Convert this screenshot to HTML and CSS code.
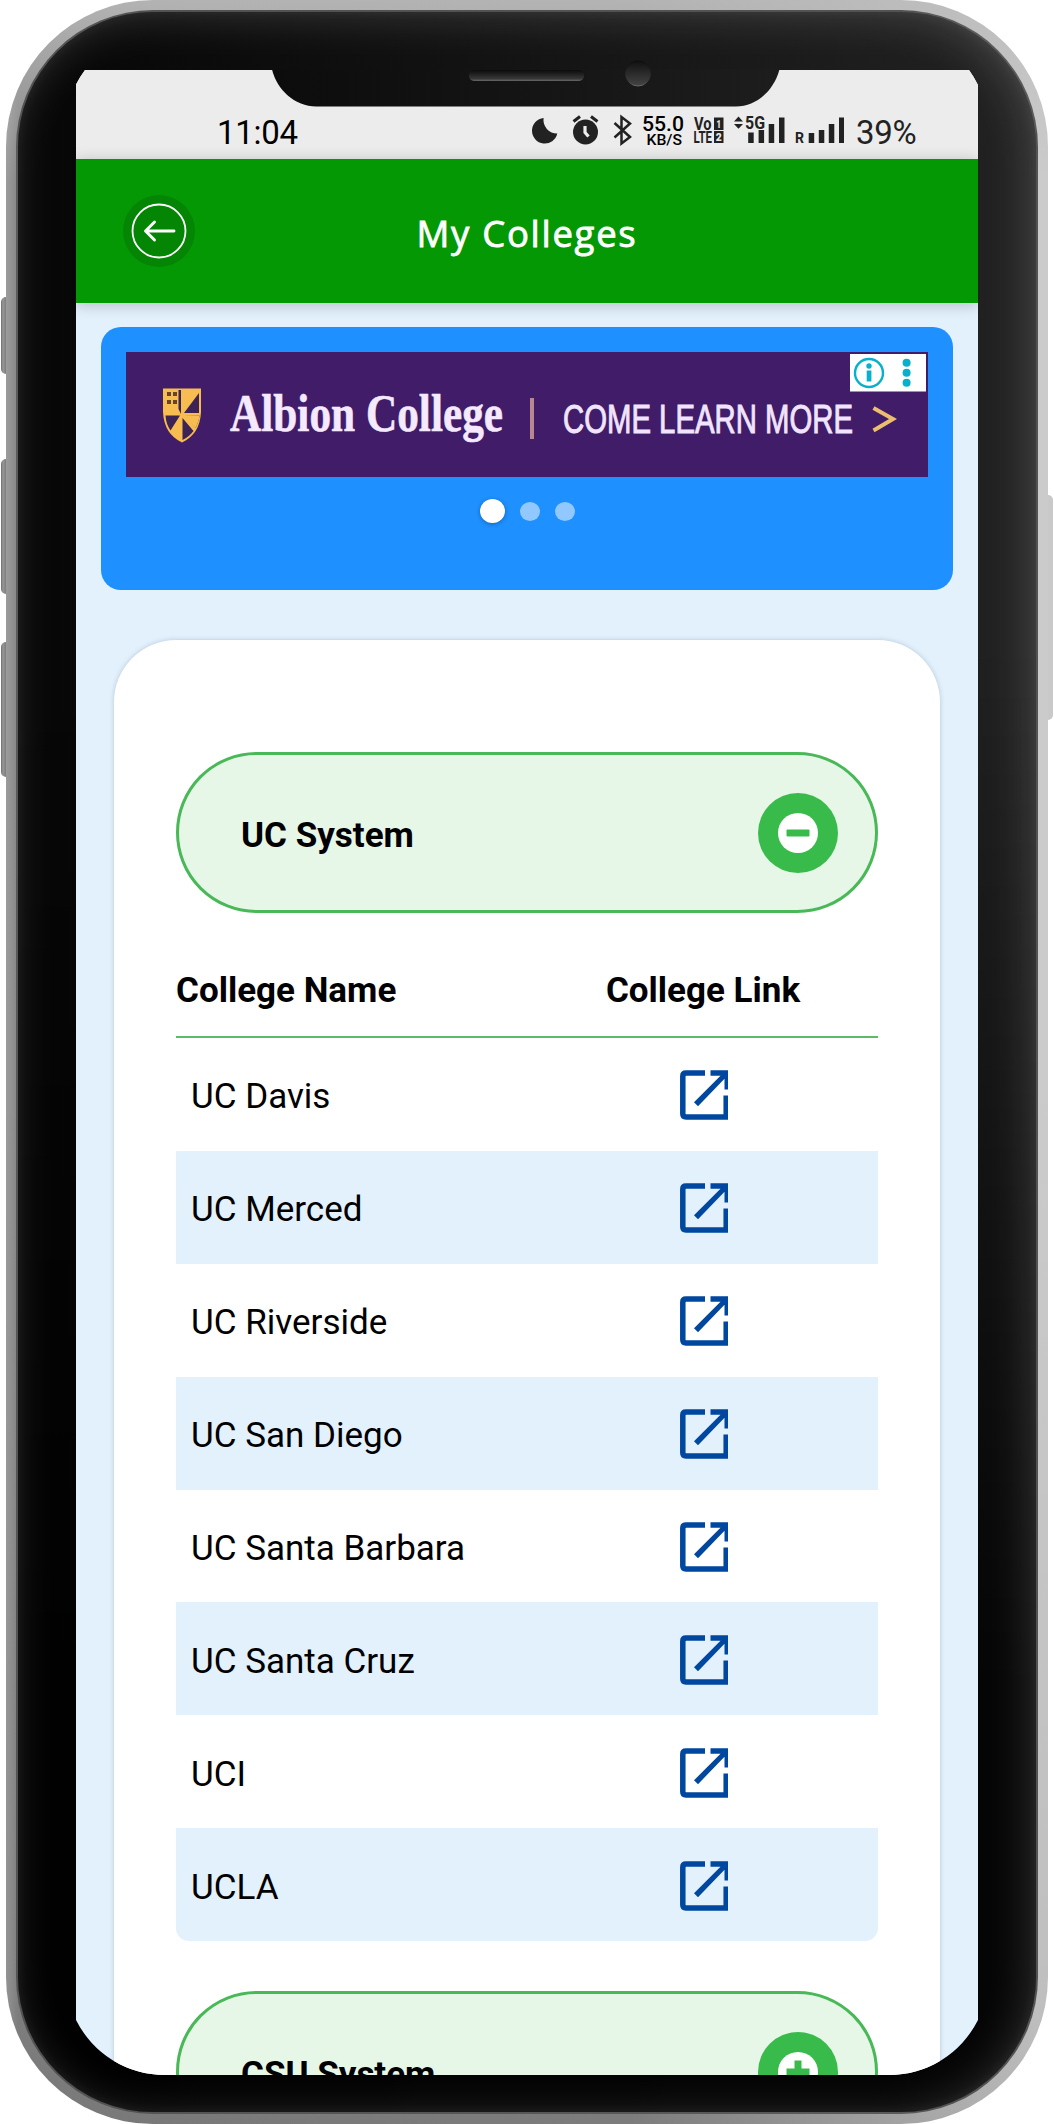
FILE: index.html
```html
<!DOCTYPE html>
<html lang="en">
<head>
<meta charset="utf-8">
<title>My Colleges</title>
<link rel="stylesheet" href="styles.css">
</head>
<body>
<svg class="defs" width="0" height="0" aria-hidden="true">
  <symbol id="open-link" viewBox="0 0 48 50">
    <path d="M25 3H6Q2.8 3 2.8 6.200V43.800Q2.800 47 6 47H46.200V25.500" fill="none" stroke="#00479f" stroke-width="5.500"/>
    <path d="M30.500 .3H48V19.500H44.500V8.800L18 36.200L14 32.300L40.500 5.800H30.500Z" fill="#00479f"/>
  </symbol>
</svg>
<div class="phone">
  <span class="key key-mute"></span>
  <span class="key key-up"></span>
  <span class="key key-down"></span>
  <span class="key key-power"></span>
  <div class="bezel">
    <main class="screen">
      <div class="status">
        <span class="clock">11:04</span>
        <svg class="status-icons" width="292" height="36" viewBox="530 112 292 36" fill="#222">
          <path d="M543.600 118A12.800 12.800 0 1 0 557.300 133.500A13.500 13.500 0 0 1 543.600 118Z"/>
          <circle cx="585.500" cy="132" r="12.500"/>
          <path d="M573.500 121.500L580 116.500M597.500 121.500L591 116.500" stroke="#222" stroke-width="3"/>
          <path d="M585 126V132.500L588.500 136.500" stroke="#ececec" stroke-width="3.200" fill="none"/>
          <path d="M614.500 123L630 137L621.500 143.500V117L630 123.500L614.500 137.500" fill="none" stroke="#222" stroke-width="2.500"/>
          <g font-family="Roboto, sans-serif" font-weight="500">
            <text x="642" y="131" font-size="20.500" textLength="42" lengthAdjust="spacingAndGlyphs" fill="#000">55.0</text>
            <text x="646.500" y="145" font-size="15.500" textLength="35.500" lengthAdjust="spacingAndGlyphs" fill="#000">KB/S</text>
            <text x="694" y="130" font-size="17.500" font-weight="700" textLength="17.500" lengthAdjust="spacingAndGlyphs">Vo</text>
            <text x="693.500" y="143" font-size="16.500" font-weight="700" textLength="18.500" lengthAdjust="spacingAndGlyphs">LTE</text>
            <text x="745" y="128.500" font-size="17.500" font-weight="700" textLength="20" lengthAdjust="spacingAndGlyphs">5G</text>
            <text x="795" y="143" font-size="15" font-weight="700" textLength="9" lengthAdjust="spacingAndGlyphs">R</text>
            <path d="M714 117.500h9.500v12.500h-9.500zM714 131h9.500v12h-9.500z"/>
            <text x="716.500" y="128" font-size="11" font-weight="900" fill="#ececec" textLength="4.500" lengthAdjust="spacingAndGlyphs">1</text>
            <text x="715.800" y="141" font-size="11" font-weight="900" fill="#ececec" textLength="6" lengthAdjust="spacingAndGlyphs">2</text>
          </g>
          <path d="M734 121.500L738.500 116.500L743 121.500ZM734 124L738.500 128.800L743 124Z"/>
          <path d="M748.200 132.500h5.500v10.500h-5.500zM758.600 130h5.500v13h-5.500zM768.700 124h5.500v19h-5.500zM779 117.500h5.500v25.500h-5.500z"/>
          <path d="M808.700 133h5.500v10h-5.500z"/>
        </svg>
        <svg class="signal" width="26" height="36" viewBox="818 112 26 36" fill="#222">
          <path d="M818.800 130h5.500v13h-5.500zM828.800 124h5.500v19h-5.500zM839 117.500h5v25.500h-5z"/>
        </svg>
        <span class="battery">39%</span>
      </div>
      <header class="bar">
        <svg class="back" width="72" height="72" viewBox="0 0 72 72" fill="none" stroke="#fff">
          <circle cx="36" cy="36" r="36" fill="#048604" stroke="none"/>
          <circle cx="36" cy="36" r="26.500" stroke-width="1.800"/>
          <path d="M51 36H23M31.500 27L22.500 36L31.500 45" stroke-width="2.900" stroke-linejoin="round" stroke-linecap="round"/>
        </svg>
        <h1>My Colleges</h1>
      </header>
      <section class="promo">
        <svg class="ad" width="802" height="125" viewBox="126 352 802 125">
          <rect x="126" y="352" width="802" height="125" fill="#401c69"/>
          <path d="M163 388.500H201V412Q200 434 182 442.500Q164 434 163 412Z" fill="#f7bd50"/>
          <path d="M181 414V390H178.500V409ZM184 413L199 393V413ZM180 415.500H165.500Q166 424 170.500 430.500ZM182.500 418V440Q189 437 193.500 431ZM185 415.500L195.500 428Q199 421 199.500 415.500Z" fill="#3d2255"/>
          <path d="M182.500 415L199.500 415.500Q199 421 195.500 428Z" fill="#f7bd50"/>
          <path d="M167 392h4v4h-4zM173 392h4v4h-4zM167 400h4v4h-4zM173 400h4v4h-4z" fill="#68442e"/>
          <text x="230" y="431" font-family="Liberation Serif, serif" font-weight="700" font-size="53" fill="#f4e9ff" stroke="#f4e9ff" stroke-width=".6" textLength="273" lengthAdjust="spacingAndGlyphs">Albion College</text>
          <rect x="530" y="398" width="4" height="41" fill="#b98792"/>
          <text x="563" y="433" font-family="Liberation Sans, sans-serif" font-size="41" fill="#f0e4ff" stroke="#f0e4ff" stroke-width="1" textLength="290" lengthAdjust="spacingAndGlyphs">COME LEARN MORE</text>
          <path d="M873.500 408L893 419L873.500 430.500" fill="none" stroke="#edbd70" stroke-width="4"/>
          <rect x="850" y="354" width="76" height="37.500" fill="#fff"/>
          <circle cx="869" cy="373" r="14" fill="none" stroke="#09b0cb" stroke-width="2.400"/>
          <g fill="#09b0cb"><circle cx="869" cy="366" r="2.700"/><path d="M866.700 370.500h4.700v11h-4.700z"/><circle cx="906.600" cy="362.800" r="4"/><circle cx="906.600" cy="372.800" r="4"/><circle cx="906.600" cy="382.800" r="4"/></g>
        </svg>
        <div class="dots"><i class="on"></i><i></i><i></i></div>
      </section>
      <section class="card">
        <div class="pill">
          <h2>UC System</h2>
          <svg width="80" height="80" viewBox="0 0 80 80"><circle cx="40" cy="40" r="40" fill="#39bb4b"/><circle cx="40" cy="40" r="20" fill="#fff"/><rect x="28.500" y="36.500" width="23" height="7" rx="1" fill="#39bb4b"/></svg>
        </div>
        <div class="table">
          <div class="row head"><span>College Name</span><span>College Link</span></div>
          <div class="row"><span>UC Davis</span><svg><use href="#open-link"/></svg></div>
          <div class="row"><span>UC Merced</span><svg><use href="#open-link"/></svg></div>
          <div class="row"><span>UC Riverside</span><svg><use href="#open-link"/></svg></div>
          <div class="row"><span>UC San Diego</span><svg><use href="#open-link"/></svg></div>
          <div class="row"><span>UC Santa Barbara</span><svg><use href="#open-link"/></svg></div>
          <div class="row"><span>UC Santa Cruz</span><svg><use href="#open-link"/></svg></div>
          <div class="row"><span>UCI</span><svg><use href="#open-link"/></svg></div>
          <div class="row"><span>UCLA</span><svg><use href="#open-link"/></svg></div>
        </div>
        <div class="pill">
          <h2>CSU System</h2>
          <svg width="80" height="80" viewBox="0 0 80 80"><circle cx="40" cy="40" r="40" fill="#39bb4b"/><circle cx="40" cy="40" r="20" fill="#fff"/><path d="M28.500 36.500h8v-8h7v8h8v7h-8v8h-7v-8h-8z" fill="#39bb4b"/></svg>
        </div>
      </section>
    </main>
    <svg class="notch" width="510" height="50" viewBox="271 58 510 50">
      <defs>
        <linearGradient id="body"><stop offset="0" stop-color="#0c0c0c"/><stop offset="1" stop-color="#1d1d1d"/></linearGradient>
        <linearGradient id="slot" x2="0" y2="1"><stop offset="0" stop-color="#0b0b0b"/><stop offset=".8" stop-color="#383838"/><stop offset="1" stop-color="#6a6a6a"/></linearGradient>
        <linearGradient id="lens" x2="0" y2="1"><stop offset="0" stop-color="#111"/><stop offset="1" stop-color="#444"/></linearGradient>
      </defs>
      <path d="M272 69.500C277 90 295 106.500 316 106.500H736C757 106.500 774 90 779.500 69.500Z" fill="url(#body)"/>
      <rect x="469" y="70" width="115" height="11" rx="5" fill="url(#slot)"/>
      <circle cx="638" cy="73.500" r="12.500" fill="url(#lens)" stroke="url(#slot)"/>
    </svg>
  </div>
</div>
</body>
</html>
```
FILE: styles.css
```css
* { box-sizing: border-box; }
body { margin: 0; background: #fff; font-family: Roboto, sans-serif; color: #000; }
.defs { display: block; }

/* device frame */
.phone {
  position: relative;
  width: 1042px;
  height: 2124px;
  margin: 0 6px;
  padding: 10px;
  border-radius: 147px / 147px;
  background:
    linear-gradient(to bottom, rgba(190,190,190,.8) 0, rgba(190,190,190,0) 180px),
    linear-gradient(to bottom, rgba(0,0,0,0) 50%, rgba(0,0,0,.06) 94%, rgba(0,0,0,.1)),
    linear-gradient(to right, #9c9c9c 0, #868686 12px, #8a8a8a 60%, #cbcbcb 99%);
}
.bezel {
  position: relative;
  height: 2104px;
  padding: 58px;
  border: 2px solid rgba(110,110,110,.75);
  border-radius: 137px;
  background:
    linear-gradient(to bottom, rgba(0,0,0,0) 30%, rgba(0,0,0,.85) 80%),
    linear-gradient(to right, #060606, #222);
  background-clip: border-box;
  box-shadow: inset -6px 4px 46px rgba(255,255,255,.17), inset 0 0 14px rgba(255,255,255,.06);
}
.key { position: absolute; left: -5px; width: 5px; border-radius: 5px 0 0 5px; background: linear-gradient(to right, #6f6f6f, #979797 40%, #7d7d7d); }
.key-mute { top: 297px; height: 77px; }
.key-up { top: 459px; height: 135px; }
.key-down { top: 642px; height: 135px; }
.key-power { top: 495px; left: 1042px; height: 225px; border-radius: 0 5px 5px 0; background: #c9c9c9; }
.notch { position: absolute; left: 253px; top: 46px; }

/* app screen */
.screen {
  width: 902px;
  height: 2005px;
  overflow: hidden;
  background: #e3f1fd;
  clip-path: path("M0 14.5A99.5 99.5 0 0 1 9 0H893A99.5 99.5 0 0 1 902 15V1950A99.5 99.5 0 0 1 813 2005H89A99.500 99.500 0 0 1 0 1950Z");
}
.status { display: flex; align-items: flex-end; height: 89px; padding: 0 0 11px 141px; background: #ececec; }
.clock, .battery { font-size: 33px; line-height: 38px; height: 34px; }
.clock { width: 313px; letter-spacing: -.3px; }
.battery { padding-left: 12px; color: #222; letter-spacing: -.3px; }
.status-icons { flex: none; margin-right: -4px; }
.signal { flex: none; }
.bar {
  position: relative;
  display: grid;
  grid-template-columns: 72px 1fr 72px;
  align-items: center;
  height: 144px;
  padding: 0 46.500px;
  background: #059805;
  box-shadow: 0 2px 14px rgba(0,0,0,.22);
}
.bar h1 { margin: 3px 0 0; text-align: center; color: #fff; font: 500 36.500px/50px "Open Sans", sans-serif; letter-spacing: 1.700px; -webkit-text-stroke: .8px #fff; }
.promo {
  display: flex;
  flex-direction: column;
  align-items: center;
  height: 263px;
  margin: 24px 25px 50px;
  padding-top: 25px;
  border-radius: 20px;
  background: #1e90ff;
}
.ad { display: block; overflow: visible; }
.dots { display: flex; align-items: center; gap: 15px; margin-top: 22px; }
.dots i { width: 20px; height: 19px; border-radius: 50%; background: #91c8ff; }
.dots .on { width: 25px; height: 24px; background: #fff; box-shadow: 0 1px 4px rgba(0,0,0,.3); }
.card {
  height: 1700px;
  margin: 0 38px;
  padding: 112px 62px 0;
  border-radius: 62px;
  background: #fff;
  box-shadow: 0 0 5px rgba(70,90,110,.28);
}
.pill {
  display: flex;
  align-items: center;
  justify-content: space-between;
  height: 161px;
  padding: 0 37.500px 0 62px;
  border: 3px solid #49b958;
  border-radius: 81px;
  background: #e6f6e7;
}
.pill h2 { margin: 6px 0 0; font-size: 35px; font-weight: 700; line-height: 42px; }
.table { margin-bottom: 50px; font-size: 35px; }
.row { display: grid; grid-template-columns: 1fr 350px; align-items: center; height: 112.900px; padding-left: 15px; }
.row span { padding-top: 5px; }
.row svg { width: 48px; height: 50px; margin: 2px 0 0 1px; justify-self: center; }
.row:nth-child(odd) { background: #e3f1fd; }
.row:last-child { border-radius: 0 0 13px 13px; }
.row.head { height: 125px; padding: 26px 0 0; border-bottom: 2px solid #5dba67; background: none; font-weight: 700; }
.head span:last-child { text-align: center; }
```
